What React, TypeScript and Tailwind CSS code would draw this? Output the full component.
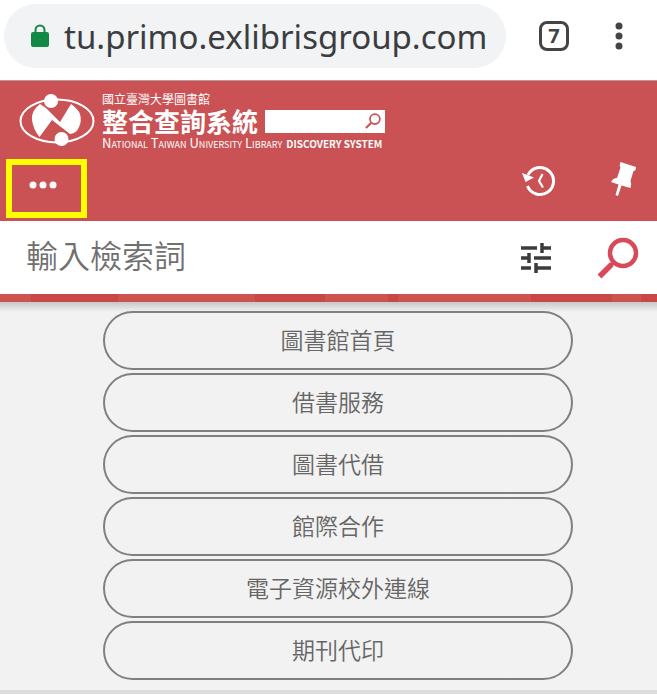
import { useState } from "react";

const MENU_ITEMS = ["圖書館首頁", "借書服務", "圖書代借", "館際合作", "電子資源校外連線", "期刊代印"];

function SearchGlyph({ className }: { className: string }) {
  return (
    <svg viewBox="0 0 42 42" className={className} fill="none" stroke="currentColor" aria-hidden="true">
      <circle cx="26" cy="16" r="13" strokeWidth="4.500" />
      <path d="M17 25L13 29" strokeWidth="4" />
      <path d="M14.500 27.500L2.500 39.500" strokeWidth="5.500" />
    </svg>
  );
}

function LogoMark() {
  return (
    <svg viewBox="0 0 78 56" className="h-14 w-[78px] shrink-0" aria-hidden="true">
      <ellipse cx="39" cy="30" rx="36.500" ry="21.500" fill="none" stroke="white" strokeWidth="2" />
      <path
        fill="white"
        d="M22 13Q13 20 14 29Q15 38 21.500 46L34 29L52 43Q59 42 61 36Q64 30 62 23Q60 18 53 13L42 31L28 17Z"
      />
      <circle cx="33" cy="10" r="7" fill="white" />
      <circle cx="43.500" cy="48" r="7" fill="white" />
    </svg>
  );
}

function BrowserBar() {
  return (
    <div className="flex h-20 items-center bg-white pb-2 pl-1">
      <div className="flex h-16 min-w-0 flex-1 items-center rounded-full bg-[#f1f3f5] pl-[27px]">
        <svg viewBox="0 0 18 24" className="h-6 w-[18px] shrink-0" aria-hidden="true">
          <path d="M4.500 10V6a4.500 4.500 0 0 1 9 0v4" fill="none" stroke="#128a46" strokeWidth="2" />
          <rect x="0" y="8" width="18" height="15" rx="2" fill="#128a46" />
        </svg>
        <input
          aria-label="網址"
          defaultValue="tu.primo.exlibrisgroup.com"
          className="mt-0.5 ml-[15px] min-w-0 flex-1 bg-transparent font-['Noto_Sans',sans-serif] text-[33px] leading-10 text-[#3c3d40] outline-none"
        />
      </div>
      <button
        type="button"
        aria-label="分頁"
        className="ml-[33px] flex size-[30px] items-center justify-center rounded-lg border-3 border-[#444] font-['Noto_Sans',sans-serif] text-xl font-bold text-[#444]"
      >
        7
      </button>
      <button type="button" aria-label="更多選項" className="mr-[34px] ml-[46px] text-[#444]">
        <svg viewBox="0 0 8 28" className="h-7 w-2" fill="currentColor" aria-hidden="true">
          <circle cx="4" cy="4" r="3.500" />
          <circle cx="4" cy="14" r="3.500" />
          <circle cx="4" cy="24" r="3.500" />
        </svg>
      </button>
    </div>
  );
}

function Header() {
  return (
    <header className="border-t border-[#b89a98] bg-[#ca5254] text-white">
      <a href="#home" className="flex pt-2.5 pl-[18px]">
        <LogoMark />
        <span className="ml-1.5 flex flex-col whitespace-nowrap">
          <span className="text-xs leading-4">國立臺灣大學圖書館</span>
          <span className="flex items-center">
            <span className="text-[26px] leading-7 font-bold">整合查詢系統</span>
            <span className="ml-[7px] flex h-[23px] w-[120px] items-center justify-end bg-white pr-1 text-[#ca5254]">
              <SearchGlyph className="size-4" />
            </span>
          </span>
          <span className="text-[13px] leading-4">
            <span className="[font-variant:small-caps]">National Taiwan University Library</span>
            <span className="ml-1 text-[10px] font-bold">DISCOVERY SYSTEM</span>
          </span>
        </span>
      </a>
      <div className="flex items-center pt-[7px] pb-[3px] pl-1.5">
        <button
          type="button"
          aria-label="選單"
          className="flex h-[59px] w-[81px] items-center border-6 border-[#ffff00] pb-2 pl-[17px]"
        >
          <svg viewBox="0 0 28 8" className="h-2 w-7" fill="currentColor" aria-hidden="true">
            <circle cx="4" cy="4" r="3.500" />
            <circle cx="14" cy="4" r="3.500" />
            <circle cx="24" cy="4" r="3.500" />
          </svg>
        </button>
        <button type="button" aria-label="查詢紀錄" className="mr-[55px] mb-4 ml-auto">
          <svg viewBox="0 0 34 32" className="h-8 w-[34px]" fill="none" stroke="currentColor" aria-hidden="true">
            <path d="M6 10A13.500 13.500 0 1 1 5.500 21" strokeWidth="3" />
            <path d="M0 8L3.500 17L12 12.500Z" fill="currentColor" stroke="none" />
            <path d="M20.500 9L17 16L21 22.500" strokeWidth="2.200" />
          </svg>
        </button>
        <button type="button" aria-label="我的最愛" className="mr-5 mb-5">
          <svg viewBox="0 0 26 36" className="h-9 w-[26px]" fill="currentColor" aria-hidden="true">
            <path d="M9.500 1L25 6Q25 10 22.500 10L19.500 20Q21 23 19.500 27L10.500 24.500L7 35L4.500 34L7.500 23.500L0 21Q2 17 6 17L9.500 6.500Q8 4.500 9.500 1Z" />
          </svg>
        </button>
      </div>
    </header>
  );
}

function SearchBar() {
  const [query, setQuery] = useState("");

  return (
    <form onSubmit={(e) => e.preventDefault()} className="flex h-[73px] items-center bg-white pl-[26px]">
      <input
        value={query}
        onChange={(e) => setQuery(e.target.value)}
        aria-label="輸入檢索詞"
        placeholder="輸入檢索詞"
        className="mb-2 min-w-0 flex-1 text-[32px] leading-10 font-[350] text-[#444] outline-none placeholder:text-[#707070]"
      />
      <button type="button" aria-label="進階檢索" className="text-[#3c3c3c]">
        <svg viewBox="0 0 32 32" className="size-8" fill="none" stroke="currentColor" strokeWidth="3.500" aria-hidden="true">
          <path d="M1 6H17M22 6H31M22 1V11M1 16H9M14 16H31M9 11V21M1 26H11M15 26H31M16 21V31" />
        </svg>
      </button>
      <button type="submit" aria-label="檢索" className="mr-[18px] ml-[45px] text-[#d84a5a]">
        <SearchGlyph className="size-[42px]" />
      </button>
    </form>
  );
}

function PatternStrip() {
  return (
    <div className="flex h-2 bg-[#cd5352]">
      <div className="ml-[31px] w-[87px] bg-[#c84848]" />
      <div className="ml-[137px] w-[70px] bg-[#c84848]" />
      <div className="ml-[63px] w-2.5 bg-[#c84848]" />
      <div className="ml-[133px] w-[81px] bg-[#c84848]" />
      <div className="ml-[29px] flex-1 bg-[#c84848]" />
    </div>
  );
}

export default function App() {
  return (
    <div className="min-h-screen bg-[#dcdcdc] font-['Noto_Sans_CJK_TC',sans-serif]">
      <BrowserBar />
      <Header />
      <SearchBar />
      <PatternStrip />
      <nav className="bg-[#f2f2f2] bg-linear-to-b from-[#c8c8c8] to-[#f2f2f2] to-[10px] pt-[9px] pb-2.5">
        <ul className="mr-[84px] ml-[103px] flex flex-col gap-[3px]">
          {MENU_ITEMS.map((item) => (
            <li key={item}>
              <a
                href="#menu"
                className="flex h-[59px] items-center justify-center rounded-full border-2 border-[#808080] pb-0.5 text-[23px] font-[350] text-[#666]"
              >
                {item}
              </a>
            </li>
          ))}
        </ul>
      </nav>
    </div>
  );
}
